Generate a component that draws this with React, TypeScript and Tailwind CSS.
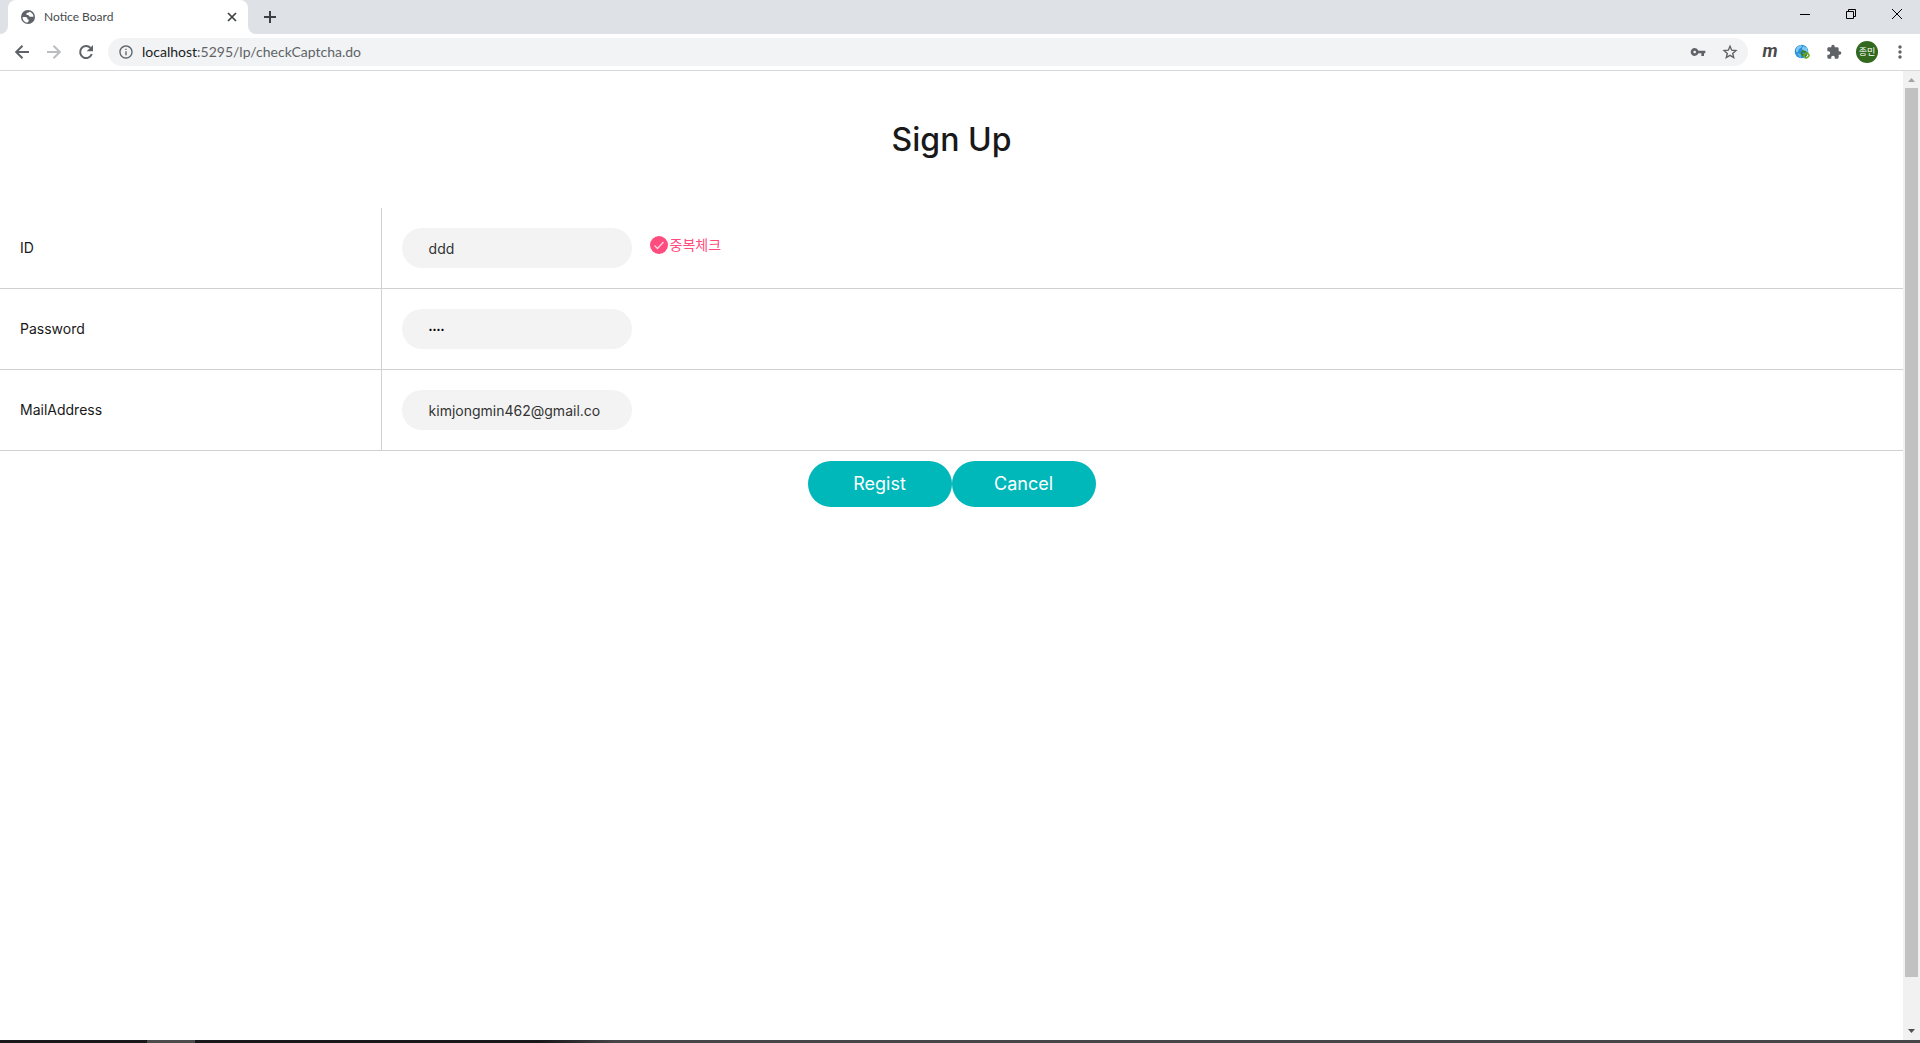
import React from "react";
import { MdOutlineInfo, MdVpnKey, MdExtension, MdMoreVert } from "react-icons/md";

const chromeFont = "font-['Lato','Noto_Sans_CJK_KR',sans-serif]";
const pageFont = "font-['Inter','Noto_Sans_CJK_KR',sans-serif]";

function LineIcon({ d, width = 2 }: { d: string; width?: number }) {
  return (
    <svg
      width="20"
      height="20"
      viewBox="0 0 20 20"
      fill="none"
      stroke="currentColor"
      strokeWidth={width}
      aria-hidden="true"
    >
      <path d={d} />
    </svg>
  );
}

function TabStrip() {
  return (
    <header className="flex h-[34px] items-end bg-[#dee1e6] pl-2">
      <div className="relative flex h-[34px] w-60 items-center rounded-t-lg bg-white pr-1.5 pl-3">
        <svg className="absolute bottom-0 -left-2 h-2 w-2" viewBox="0 0 8 8" aria-hidden="true">
          <path d="M8 0v8H0a8 8 0 0 0 8-8z" fill="#fff" />
        </svg>
        <svg className="absolute -right-2 bottom-0 h-2 w-2" viewBox="0 0 8 8" aria-hidden="true">
          <path d="M0 0v8h8a8 8 0 0 1-8-8z" fill="#fff" />
        </svg>
        <svg className="size-4" viewBox="0 0 16 16" aria-hidden="true">
          <circle cx="8" cy="8" r="7" fill="#5f6368" />
          <path
            d="M2.600 8h2.800c1.500 0 2 .8 2 1.700 0 .7.6.9 1.300.9v1.200c0 .6-.8 1.700-1.500 1.900A5.600 5.600 0 0 1 2.600 8z"
            fill="#fff"
          />
          <path
            d="M9 2.700c-.2 1-.9 1-1.700 1.100-.8.100-.9.700-.9 1.400 0 .8.700.9 1.500.9 1 0 1 1.600 2 1.600h3.600A5.600 5.600 0 0 0 9 2.700z"
            fill="#fff"
          />
        </svg>
        <span className="ml-2 flex-1 text-xs text-[#45494d]">Notice Board</span>
        <button aria-label="Close tab" className="text-[#3c4043]">
          <LineIcon d="M6 6l8 8M14 6l-8 8" width={1.7} />
        </button>
      </div>
      <button aria-label="New tab" className="ml-3 flex h-full items-center text-[#3c4043]">
        <LineIcon d="M10 4v12M4 10h12" />
      </button>
      <div className="ml-auto flex h-7 items-center self-start text-black">
        <button aria-label="Minimize" className="flex w-[46px] justify-center">
          <svg width="10" height="10" aria-hidden="true">
            <path d="M0 5.500h10" stroke="currentColor" />
          </svg>
        </button>
        <button aria-label="Restore" className="flex w-[46px] justify-center">
          <svg width="10" height="10" fill="none" stroke="currentColor" aria-hidden="true">
            <path d="M.5 2.500h7v7h-7zM2.500 2.500V.5h7v7h-2" />
          </svg>
        </button>
        <button aria-label="Close window" className="flex w-[46px] justify-center">
          <svg width="10" height="10" stroke="currentColor" aria-hidden="true">
            <path d="M0 0l10 10M10 0L0 10" />
          </svg>
        </button>
      </div>
    </header>
  );
}

function Toolbar() {
  return (
    <nav className="flex h-[37px] items-center border-b border-[#d6d8db] pr-2.5 pl-3 text-[#5f6368]">
      <button aria-label="Back">
        <LineIcon d="M17 10H4.500M10.500 3.700L4.200 10l6.300 6.300" />
      </button>
      <button aria-label="Forward" className="ml-3 text-[#bbbdbf]">
        <LineIcon d="M3 10h12.500M9.500 3.700l6.300 6.300-6.300 6.300" />
      </button>
      <button aria-label="Reload" className="ml-3">
        <svg width="20" height="20" viewBox="0 0 20 20" aria-hidden="true">
          <path d="M15.800 12a6 6 0 1 1-1.300-6.100" fill="none" stroke="currentColor" strokeWidth="2" />
          <path d="M17 3v6.300h-6.300z" fill="currentColor" />
        </svg>
      </button>
      <div className="ml-3 flex h-7 flex-1 items-center rounded-full bg-[#f1f3f4] px-2.5">
        <MdOutlineInfo className="size-4" />
        <a href="#" className="ml-2 flex-1 text-sm">
          <span className="text-[#202124]">localhost</span>:5295/lp/checkCaptcha.do
        </a>
        <button aria-label="Saved passwords">
          <MdVpnKey className="size-4" />
        </button>
        <button aria-label="Bookmark this page" className="ml-4">
          <svg width="16" height="16" viewBox="0 0 16 16" aria-hidden="true">
            <path
              d="M8 2.300l1.700 3.900 4.200.4-3.200 2.800 1 4.200L8 11.400l-3.700 2.200 1-4.200-3.200-2.800 4.200-.4z"
              fill="none"
              stroke="currentColor"
              strokeWidth="1.400"
            />
          </svg>
        </button>
      </div>
      <button
        aria-label="m extension"
        className="ml-3.5 flex h-6 w-4 items-center justify-center pb-0.5 font-['Roboto',sans-serif] text-lg leading-5 font-bold text-[#4a4a4a] italic"
      >
        m
      </button>
      <button aria-label="Globe extension" className="ml-4">
        <svg width="16" height="16" viewBox="0 0 16 16" aria-hidden="true">
          <circle cx="7.500" cy="7.500" r="6.800" fill="#2a8fd6" />
          <path d="M2 5q2-4 5-4l1 2-3 2-1 3-2 0zM9 2l4 2 1 4-4 0-2-3z" fill="#7cc8f2" />
          <path d="M3 9l4 1 0 4-2-1z" fill="#5ab4ea" />
          <rect x="7.500" y="7.500" width="5" height="4" rx="2" transform="rotate(30 10 9.500)" fill="none" stroke="#3f7d12" strokeWidth="1.500" />
          <rect x="10" y="9.500" width="5" height="4" rx="2" transform="rotate(-30 12.500 11.500)" fill="none" stroke="#6da821" strokeWidth="1.500" />
        </svg>
      </button>
      <button aria-label="Extensions" className="ml-4">
        <MdExtension className="size-4" />
      </button>
      <button aria-label="Profile" className="ml-3.5 size-[22px] rounded-full bg-[#33691e] text-[9px] leading-5 text-white">
        종민
      </button>
      <button aria-label="Menu" className="ml-3">
        <MdMoreVert className="size-5" />
      </button>
    </nav>
  );
}

const fields = [
  { id: "userId", label: "ID", type: "text", value: "ddd" },
  { id: "password", label: "Password", type: "password", value: "1234" },
  { id: "mail", label: "MailAddress", type: "text", value: "kimjongmin462@gmail.co" },
];

function SignUp() {
  return (
    <main className={`flex-1 text-[#191919] ${pageFont}`}>
      <h1 className="pt-[49px] pb-12 text-center text-[32px] leading-10 font-medium">Sign Up</h1>
      <form onSubmit={(e) => e.preventDefault()}>
        <table className="w-full table-fixed border-separate border-spacing-0">
          <tbody>
            {fields.map((f) => (
              <tr key={f.id}>
                <th scope="row" className="w-1/5 border-b border-[#d0d0d0] px-5 text-left text-sm font-normal">
                  <label htmlFor={f.id}>{f.label}</label>
                </th>
                <td className="border-b border-l border-[#d0d0d0] p-5">
                  <div className="flex items-center">
                    <input
                      id={f.id}
                      type={f.type}
                      defaultValue={f.value}
                      className={
                        f.type === "password"
                          ? "h-10 w-[230px] rounded-full bg-[#f3f3f3] px-[27px] text-[7px] text-black outline-none"
                          : "h-10 w-[230px] rounded-full bg-[#f3f3f3] px-[27px] text-sm text-[#333] outline-none"
                      }
                    />
                    {f.id === "userId" && (
                      <button
                        type="button"
                        className="mb-1.5 ml-[18px] flex items-center gap-0.5 text-sm leading-5 text-[#ff4b7d]"
                      >
                        <svg width="18" height="18" viewBox="0 0 18 18" aria-hidden="true">
                          <circle cx="9" cy="9" r="9" fill="#ff4b7d" />
                          <path d="M4.500 9.500l3 3 6-6.500" fill="none" stroke="#ffd5e0" strokeWidth="1.300" />
                        </svg>
                        중복체크
                      </button>
                    )}
                  </div>
                </td>
              </tr>
            ))}
          </tbody>
        </table>
        <div className="flex justify-center pt-2.5">
          <button type="submit" className="h-[46px] w-36 rounded-full bg-[#00b7b9] text-lg text-white">
            Regist
          </button>
          <button type="button" className="h-[46px] w-36 rounded-full bg-[#00b7b9] text-lg text-white">
            Cancel
          </button>
        </div>
      </form>
    </main>
  );
}

function Scrollbar() {
  return (
    <aside aria-label="Page scrollbar" className="flex w-[17px] flex-col items-center bg-[#f1f1f1]">
      <svg className="h-[17px] w-[17px] shrink-0" viewBox="0 0 17 17" aria-hidden="true">
        <path d="M5 11l3.500-4 3.500 4z" fill="#a3a3a3" />
      </svg>
      <div className="w-[13px] grow-[889] bg-[#c1c1c1]" />
      <div className="grow-[46]" />
      <svg className="h-[17px] w-[17px] shrink-0" viewBox="0 0 17 17" aria-hidden="true">
        <path d="M5 6l3.500 4L12 6z" fill="#505050" />
      </svg>
    </aside>
  );
}

export default function App() {
  return (
    <div className={`flex min-h-screen flex-col bg-white ${chromeFont}`}>
      <TabStrip />
      <Toolbar />
      <div className="flex flex-1">
        <SignUp />
        <Scrollbar />
      </div>
      <footer className="flex h-[3px] bg-linear-to-r from-[#18181b] from-28% to-[#464648] to-32%">
        <div className="ml-[147px] w-12 bg-[#4c4c4c]" />
      </footer>
    </div>
  );
}
